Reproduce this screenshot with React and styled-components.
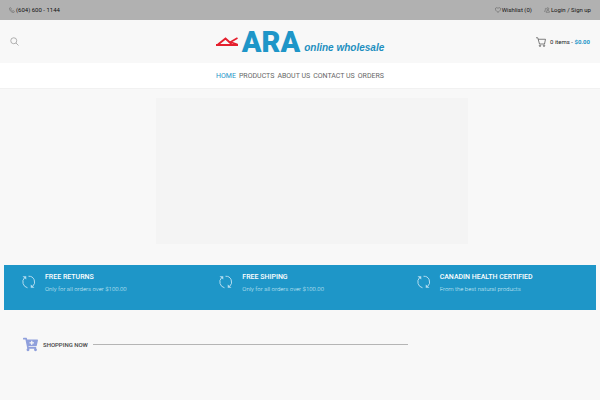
import React from 'react'
import styled, { createGlobalStyle } from 'styled-components'
import { FaCartPlus } from 'react-icons/fa'

const menu = ['HOME', 'PRODUCTS', 'ABOUT US', 'CONTACT US', 'ORDERS']

const services = [
    { title: 'FREE RETURNS', text: 'Only for all orders over $100.00' },
    { title: 'FREE SHIPING', text: 'Only for all orders over $100.00' },
    { title: 'CANADIN HEALTH CERTIFIED', text: 'From the best natural products' },
]

const PhoneIcon = () => (
    <svg width="6" height="6" viewBox="0 0 12 12" fill="none" stroke="#666" strokeWidth="1.2" aria-hidden="true">
        <path d="M1 2.5 2.8 1 5 3.8 3.9 5c.7 1.3 1.7 2.3 3.1 3.1L8.2 7 11 9.2 9.5 11C5 11.2.8 7 1 2.5z" />
    </svg>
)

const HeartIcon = () => (
    <svg width="6" height="6" viewBox="0 0 12 12" fill="none" stroke="#555" strokeWidth="1" aria-hidden="true">
        <path d="M6 10.8C3 8.5.7 6.3.7 4 .7 1.2 4.3.2 6 3c1.7-2.8 5.3-1.8 5.3 1 0 2.3-2.3 4.500-5.300 6.800z" />
    </svg>
)

const UsersIcon = () => (
    <svg width="6" height="6" viewBox="0 0 12 12" fill="none" stroke="#666" strokeWidth="1.2" aria-hidden="true">
        <circle cx="7.5" cy="3.5" r="2" />
        <path d="M4 10.5c0-5 7-5 7 0zM1 9.5c0-2 .8-3 2.5-3.5M4.5 2.5c-2-.5-2.800 2-1.200 3" />
    </svg>
)

const SearchIcon = () => (
    <svg width="9" height="9" viewBox="0 0 18 18" fill="none" stroke="#999" strokeWidth="1.5" aria-hidden="true">
        <circle cx="7.5" cy="7.5" r="6" />
        <path d="M12 12l5 5" />
    </svg>
)

const BasketIcon = () => (
    <svg width="10" height="10" viewBox="0 0 20 20" fill="none" stroke="#555" strokeWidth="1.5" aria-hidden="true">
        <path d="M0 1.5h3.5L7 14h10.5M4.5 4.5H19L17 14" />
        <circle cx="8" cy="17.5" r="1.5" />
        <circle cx="16" cy="17.5" r="1.5" />
    </svg>
)

const RefreshIcon = () => (
    <ServiceIcon viewBox="0 0 26 28" fill="none" stroke="#b5ddf0" strokeWidth="2" aria-hidden="true">
        <path d="M5 5.5A12 12 0 0 0 11 25.5M13 2.5A11.500 11.500 0 0 1 21.500 22.500" />
        <path d="M1 2.500h7.500V9zM17.500 19v6.500H25z" fill="#b5ddf0" stroke="none" />
    </ServiceIcon>
)

const LogoMark = () => (
    <svg width="22" height="9" viewBox="0 0 44 18" fill="none" stroke="#e5202e" strokeWidth="4" aria-hidden="true">
        <path d="M0 16h44" />
        <path d="M4 15 19 3l12 11" />
        <path d="M43 2 29 10l14 5" strokeWidth="3.5" />
    </svg>
)

export default () => {
    return (
        <>
            <GlobalStyle />
            <TopBar>
                <TopLink href="tel:6046001144"><PhoneIcon />(604) 600 - 1144</TopLink>
                <TopLinks>
                    <TopLink href="#wishlist"><HeartIcon />Wishlist (0)</TopLink>
                    <TopLink href="#login"><UsersIcon />Login / Sign up</TopLink>
                </TopLinks>
            </TopBar>
            <Header>
                <SearchButton type="button" aria-label="Search"><SearchIcon /></SearchButton>
                <Logo href="#home">
                    <LogoMark />
                    <LogoName>ARA</LogoName>
                    <LogoTagline>online wholesale</LogoTagline>
                </Logo>
                <Cart href="#cart">
                    <BasketIcon />
                    <span>0 items - <Price>$0.00</Price></span>
                </Cart>
            </Header>
            <Nav>
                {menu.map((item, i) => (
                    <NavLink key={item} href="#" $active={i === 0}>{item}</NavLink>
                ))}
            </Nav>
            <main>
                <Slider />
                <Services>
                    {services.map(({ title, text }) => (
                        <Service key={title}>
                            <RefreshIcon />
                            <div>
                                <ServiceTitle>{title}</ServiceTitle>
                                <ServiceText>{text}</ServiceText>
                            </div>
                        </Service>
                    ))}
                </Services>
                <Shopping>
                    <FaCartPlus size={15} color="#8f9fdc" aria-hidden="true" />
                    <ShoppingTitle>SHOPPING NOW</ShoppingTitle>
                    <Line />
                </Shopping>
            </main>
        </>
    )
}

const GlobalStyle = createGlobalStyle`
* {
    box-sizing:border-box;
}
body {
    margin:0;
    background-color:#f8f8f8;
    color:#222;
    font-family:Roboto, sans-serif;
    font-size:6px;
    line-height:10px;
}
a {
    color:inherit;
    text-decoration:none;
}
svg {
    flex-shrink:0;
}
`

const TopBar = styled.div`
display:flex;
justify-content:space-between;
align-items:center;
height:20px;
padding:0 9px;
background-color:#b1b1b1;
`

const TopLinks = styled.div`
display:flex;
gap:12px;
`

const TopLink = styled.a`
display:flex;
align-items:center;
gap:1px;
color:#111;
`

const Header = styled.header`
display:grid;
grid-template-columns:1fr auto 1fr;
align-items:center;
height:43px;
padding:0 10px;
`

const SearchButton = styled.button`
display:flex;
justify-self:start;
padding:0;
border:none;
background:none;
cursor:pointer;
`

const Logo = styled.a`
display:flex;
align-items:center;
gap:4px;
`

const LogoName = styled.span`
color:#1e96c8;
font-size:29px;
font-weight:900;
line-height:30px;
`

const LogoTagline = styled.span`
padding-top:13px;
color:#1e8fbf;
font-family:"Liberation Sans", sans-serif;
font-size:10px;
font-weight:bold;
font-style:italic;
`

const Cart = styled.a`
display:flex;
justify-self:end;
align-items:center;
gap:4px;
`

const Price = styled.b`
color:#1e96c8;
`

const Nav = styled.nav`
display:flex;
justify-content:center;
align-items:center;
gap:3px;
height:26px;
border-bottom:1px solid #f1f1f1;
background-color:white;
`

const NavLink = styled.a`
color:${({ $active }) => ($active ? '#1e96c8' : '#666')};
font-size:7px;
`

const Slider = styled.section`
width:52%;
aspect-ratio:312 / 146;
margin:9px 0 0 26%;
background-color:#f4f4f4;
`

const Services = styled.section`
display:grid;
grid-template-columns:repeat(3, 1fr);
margin:21px 4px 0;
padding:7px 0 15px;
background-color:#1e96c8;
`

const Service = styled.div`
display:flex;
align-items:flex-start;
gap:10px;
padding-left:18px;
`

const ServiceIcon = styled.svg`
width:13px;
height:14px;
margin-top:3px;
`

const ServiceTitle = styled.h2`
margin:0;
color:white;
font-size:7px;
font-weight:500;
line-height:11px;
`

const ServiceText = styled.p`
margin:0;
color:#d5ecf6;
font-weight:300;
line-height:12px;
`

const Shopping = styled.section`
display:flex;
align-items:center;
width:68%;
margin-top:27px;
padding-left:23px;
`

const ShoppingTitle = styled.h2`
margin:0 5px;
color:#444;
font-size:6px;
font-weight:500;
`

const Line = styled.hr`
flex:1;
margin:0;
border:none;
border-top:1px solid #b5b5b5;
`
